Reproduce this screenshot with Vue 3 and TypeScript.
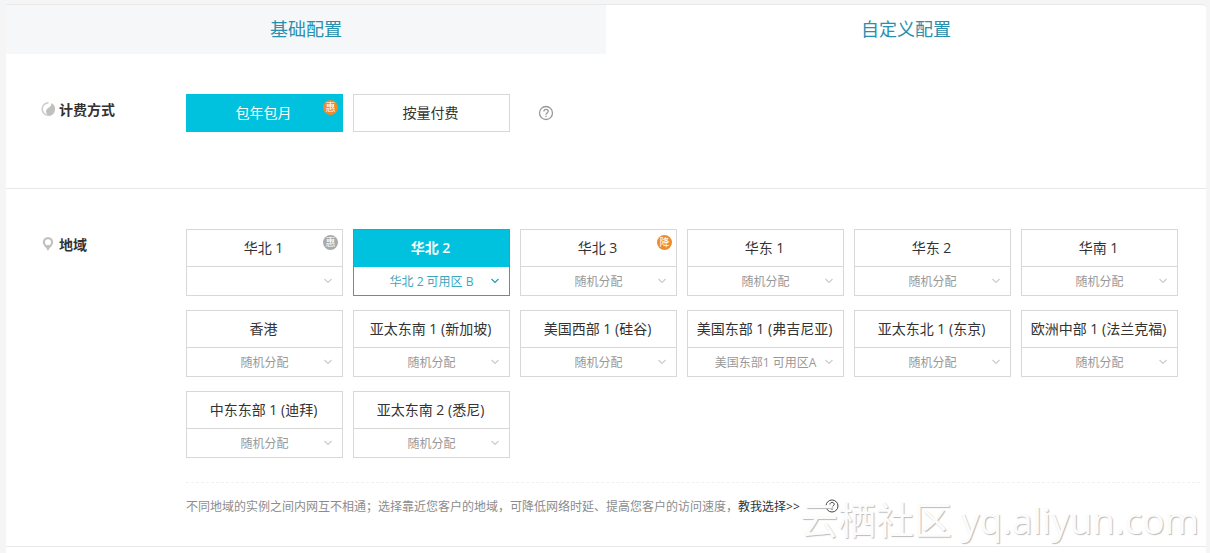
<script setup lang="ts">
import { ref } from 'vue'

interface Badge {
  text: string
  tone: 'orange' | 'grey'
}

interface Region {
  name: string
  zone: string
  badge?: Badge
}

const RANDOM = '随机分配'

const tabs = ['基础配置', '自定义配置']
const activeTab = ref(1)

const billingModes: { name: string; badge?: Badge }[] = [
  { name: '包年包月', badge: { text: '惠', tone: 'orange' } },
  { name: '按量付费' },
]
const billing = ref(0)

const regions: Region[] = [
  { name: '华北 1', zone: '', badge: { text: '惠', tone: 'grey' } },
  { name: '华北 2', zone: '华北 2 可用区 B' },
  { name: '华北 3', zone: RANDOM, badge: { text: '降', tone: 'orange' } },
  { name: '华东 1', zone: RANDOM },
  { name: '华东 2', zone: RANDOM },
  { name: '华南 1', zone: RANDOM },
  { name: '香港', zone: RANDOM },
  { name: '亚太东南 1 (新加坡)', zone: RANDOM },
  { name: '美国西部 1 (硅谷)', zone: RANDOM },
  { name: '美国东部 1 (弗吉尼亚)', zone: '美国东部1 可用区A' },
  { name: '亚太东北 1 (东京)', zone: RANDOM },
  { name: '欧洲中部 1 (法兰克福)', zone: RANDOM },
  { name: '中东东部 1 (迪拜)', zone: RANDOM },
  { name: '亚太东南 2 (悉尼)', zone: RANDOM },
]
const region = ref(1)
</script>

<template>
  <main class="page">
    <div class="panel">
      <div class="tabs" role="tablist">
        <button
          v-for="(tab, i) in tabs"
          :key="tab"
          type="button"
          role="tab"
          class="tab"
          :class="{ active: i === activeTab }"
          :aria-selected="i === activeTab"
          @click="activeTab = i"
        >{{ tab }}</button>
      </div>

      <section class="section billing">
        <h2 class="label">
          <svg class="label-icon" viewBox="0 0 16 16" aria-hidden="true">
            <path d="M8.5 1.7A6.3 6.3 0 1 0 8.500 14.3" fill="none" stroke="#cccccc" stroke-width="1.6" />
            <path d="M11.5 2A7 7 0 0 1 9 15C6 13.500 5 9.500 7.500 7.500C9.500 6.300 11.500 5 11.500 2Z" fill="#c0c0c0" />
          </svg>
          计费方式
        </h2>
        <div class="modes">
          <button
            v-for="(mode, i) in billingModes"
            :key="mode.name"
            type="button"
            class="mode"
            :class="{ selected: i === billing }"
            :aria-pressed="i === billing"
            @click="billing = i"
          >
            {{ mode.name }}
            <span v-if="mode.badge" class="badge" :class="mode.badge.tone">{{ mode.badge.text }}</span>
          </button>
          <button type="button" class="help" aria-label="计费方式说明">
            <svg viewBox="0 0 16 16" aria-hidden="true">
              <circle cx="8" cy="8" r="6.500" />
              <path d="M5.900 6.500C5.900 3.700 10.200 3.800 10.200 6.300C10.200 8 8 7.900 8 9.700M8 10.700V11.900" />
            </svg>
          </button>
        </div>
      </section>

      <section class="section area">
        <h2 class="label">
          <svg class="label-icon" viewBox="0 0 16 16" aria-hidden="true">
            <path fill-rule="evenodd" d="M8 1A5.200 5.200 0 0 0 2.800 6.200C2.800 9.200 6.500 11.500 8 15C9.500 11.500 13.200 9.200 13.200 6.200A5.200 5.200 0 0 0 8 1ZM8 3.200A3 3 0 1 1 8 9.200A3 3 0 1 1 8 3.200Z" fill="#c0c0c0" />
          </svg>
          地域
        </h2>
        <div class="content">
          <div class="grid">
            <div
              v-for="(item, i) in regions"
              :key="item.name"
              class="card"
              :class="{ selected: i === region }"
            >
              <button type="button" class="name" :aria-pressed="i === region" @click="region = i">
                {{ item.name }}
                <span v-if="item.badge" class="badge" :class="item.badge.tone">{{ item.badge.text }}</span>
              </button>
              <div class="zone">
                <select :aria-label="item.name + ' 可用区'">
                  <option>{{ item.zone }}</option>
                </select>
                <svg class="chevron" viewBox="0 0 10 10" aria-hidden="true">
                  <path d="M1.500 3L5 6.500L8.500 3" />
                </svg>
              </div>
            </div>
          </div>

          <div class="hint">
            <p>不同地域的实例之间内网互不相通；选择靠近您客户的地域，可降低网络时延、提高您客户的访问速度，<a href="#">教我选择&gt;&gt;</a></p>
            <button type="button" class="help dark" aria-label="地域说明">
              <svg viewBox="0 0 16 16" aria-hidden="true">
                <circle cx="8" cy="8" r="6" />
                <path d="M5.900 6.500C5.900 3.700 10.200 3.800 10.200 6.300C10.200 8 8 7.900 8 9.700M8 10.700V11.900" />
              </svg>
            </button>
            <div class="watermark"><span class="community">云栖社区</span><span>yq.aliyun.com</span></div>
          </div>
        </div>
      </section>
    </div>
  </main>
</template>

<style>
body {
  background: #f5f5f5;
}
</style>

<style scoped>
.page {
  padding: 4px 4px 0 6px;
  min-height: 100vh;
  box-sizing: border-box;
  overflow: hidden;
  font-family: "Open Sans", "Noto Sans CJK SC", sans-serif;
  font-size: 14px;
  color: #333;
}

button,
select {
  font: inherit;
  color: inherit;
  margin: 0;
  padding: 0;
  border: 0;
  background: none;
  cursor: pointer;
}

.panel {
  background: #fff;
  border-top: 1px solid #e9e9e9;
  border-radius: 0 4px 0 0;
  min-height: calc(100vh - 4px);
  box-sizing: border-box;
}

.tabs {
  display: grid;
  grid-template-columns: 1fr 1fr;
}

.tab {
  height: 49px;
  font-size: 18px;
  line-height: 49px;
  color: #2690ae;
  background: #f6f7f9;
}

.tab.active {
  background: none;
}

.section {
  display: flex;
  align-items: flex-start;
  padding: 40px 6px 0 34px;
  border-bottom: 1px solid #e8e8e8;
}

.billing {
  padding-bottom: 56px;
}

.label {
  display: flex;
  align-items: center;
  gap: 3px;
  flex: 0 0 146px;
  height: 30px;
  margin: 0;
  font-size: 14px;
  font-weight: 700;
}

.label-icon {
  width: 16px;
  height: 16px;
}

.modes {
  display: flex;
  align-items: center;
  gap: 10px;
}

.mode {
  position: relative;
  width: 157px;
  height: 38px;
  padding: 0 2px 2px 0;
  border: 1px solid #d8d8d8;
}

.mode.selected {
  color: #fff;
  background: #00c1de;
  border-color: #00c1de;
}

.help {
  display: block;
  width: 16px;
  height: 16px;
  margin-left: 18px;
}

.help svg {
  display: block;
  fill: none;
  stroke: #999;
  stroke-width: 1.3;
}

.help.dark svg {
  stroke: #444;
  stroke-width: 1;
}

.badge {
  position: absolute;
  top: 5px;
  right: 4px;
  width: 15px;
  height: 15px;
  border-radius: 50%;
  font-size: 10px;
  font-weight: 400;
  line-height: 15px;
  text-align: center;
  color: #fff;
}

.badge.orange {
  background: #ee8a30;
}

.badge.grey {
  background: #aaa;
}

.content {
  flex: 1;
  min-width: 0;
}

.grid {
  display: grid;
  grid-template-columns: repeat(auto-fill, 157px);
  gap: 14px 10px;
}

.card {
  box-sizing: border-box;
  border: 1px solid #d8d8d8;
}

.name {
  position: relative;
  display: block;
  width: 100%;
  height: 37px;
  padding: 0 2px 2px 0;
  border-bottom: 1px solid #d8d8d8;
  white-space: nowrap;
}

.zone {
  position: relative;
  height: 28px;
}

.zone select {
  appearance: none;
  display: block;
  width: 100%;
  height: 28px;
  font-size: 12px;
  text-align: center;
  text-align-last: center;
  color: #999;
}

.chevron {
  position: absolute;
  top: 9px;
  right: 9px;
  width: 10px;
  height: 10px;
  fill: none;
  stroke: #ccc;
  stroke-width: 1.2;
  pointer-events: none;
}

.card.selected {
  border-color: #1cadc2;
}

.card.selected .name {
  color: #fff;
  font-weight: 600;
  background: #00c1de;
  border-color: #00c1de;
}

.card.selected .zone select {
  color: #3aa8bd;
}

.card.selected .chevron {
  stroke: #1f9db5;
}

.hint {
  position: relative;
  display: flex;
  align-items: center;
  height: 46px;
  margin-top: 24px;
  padding-bottom: 17px;
  border-top: 1px dashed #f1f1f1;
  font-size: 12px;
}

.hint p {
  margin: 0;
  color: #8c8c8c;
}

.hint a {
  color: #333;
  text-decoration: none;
}

.hint .help {
  margin-left: 24px;
}

.watermark {
  position: absolute;
  right: 1px;
  bottom: 2px;
  display: flex;
  align-items: baseline;
  gap: 9px;
  font-size: 37px;
  line-height: 48px;
  white-space: nowrap;
  color: #fcfcfc;
  text-shadow: 1px 1px 1px #bbb;
  pointer-events: none;
}

.community {
  font-size: 38px;
}
</style>
